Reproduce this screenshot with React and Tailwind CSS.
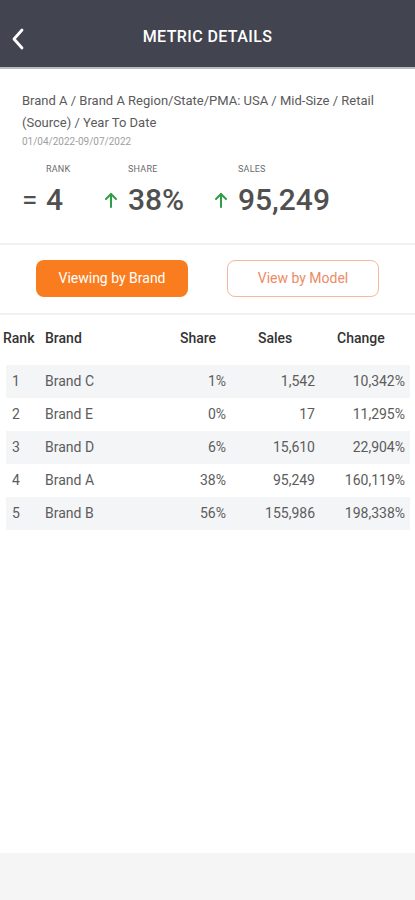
import React from "react";

const rows = [
  { rank: 1, brand: "Brand C", share: "1%", sales: "1,542", change: "10,342%" },
  { rank: 2, brand: "Brand E", share: "0%", sales: "17", change: "11,295%" },
  { rank: 3, brand: "Brand D", share: "6%", sales: "15,610", change: "22,904%" },
  { rank: 4, brand: "Brand A", share: "38%", sales: "95,249", change: "160,119%" },
  { rank: 5, brand: "Brand B", share: "56%", sales: "155,986", change: "198,338%" },
];

const UpArrow = () => (
  <svg width="14" height="16" viewBox="0 0 14 16" fill="none" stroke="#2f9e48" strokeWidth="2" strokeLinecap="round" strokeLinejoin="round">
    <path d="M7 15V2" />
    <path d="M2 7l5-5 5 5" />
  </svg>
);

const Stat = ({ label, value, symbol, width }) => (
  <div className={`flex items-end ${width}`}>
    <div className="w-[24px] h-[30px] flex items-center">{symbol}</div>
    <div className="flex flex-col">
      <span className="text-[9px] leading-[12px] tracking-wide text-[#6b6b6b] uppercase mb-[10px]">{label}</span>
      <span className="text-[30px] leading-[30px] font-medium text-[#505050]">{value}</span>
    </div>
  </div>
);

export default function App() {
  return (
    <div className="min-h-[900px] flex flex-col bg-white" style={{ fontFamily: "Roboto, 'Liberation Sans', sans-serif" }}>
      {/* Header */}
      <div className="h-[69px] pt-[7px] bg-[#42444f] border-b-2 border-[#b9bbc1] flex items-center relative">
        <button className="absolute left-[8px] top-[25px] p-[2px]" aria-label="Back">
          <svg width="16" height="24" viewBox="0 0 16 24" fill="none" stroke="white" strokeWidth="2.8" strokeLinecap="round" strokeLinejoin="round">
            <path d="M12 3L4 12l8 9" />
          </svg>
        </button>
        <h1 className="flex-1 text-center text-white text-[16px] font-medium tracking-wide">METRIC DETAILS</h1>
      </div>

      {/* Summary */}
      <div className="px-[22px] pt-[21px] pb-[28px] border-b-2 border-[#f1f1f1]">
        <p className="text-[13px] leading-[22px] text-[#5a5a5a]">
          Brand A / Brand A Region/State/PMA: USA / Mid-Size / Retail (Source) / Year To Date
        </p>
        <p className="text-[10px] leading-[14px] text-[#a0a0a0] mt-[1px]">01/04/2022-09/07/2022</p>
        <div className="flex mt-[14px]">
          <Stat width="w-[82px]" label="Rank" value="4" symbol={<span className="text-[28px] leading-[30px] text-[#505050]">=</span>} />
          <Stat width="w-[110px]" label="Share" value="38%" symbol={<UpArrow />} />
          <Stat width="" label="Sales" value="95,249" symbol={<UpArrow />} />
        </div>
      </div>

      {/* Toggle */}
      <div className="flex justify-center gap-[39px] pt-[15px] pb-[16px] border-b-2 border-[#f1f1f1]">
        <button className="w-[152px] h-[37px] rounded-[8px] bg-[#f97d1f] text-white text-[14px]">Viewing by Brand</button>
        <button className="w-[152px] h-[37px] rounded-[8px] border border-[#f5b89c] text-[#ec8a66] text-[14px]">View by Model</button>
      </div>

      {/* Table */}
      <div className="pt-[13px]">
        <div className="flex px-[3px] h-[20px] items-center text-[14px] font-medium text-[#333]">
          <span className="w-[42px]">Rank</span>
          <span className="w-[135px]">Brand</span>
          <span className="w-[78px]">Share</span>
          <span className="w-[79px]">Sales</span>
          <span>Change</span>
        </div>
        <div className="mt-[17px] mx-[6px] mr-[5px]">
          {rows.map((r, i) => (
            <div key={r.rank} className={`flex items-center h-[33px] text-[14px] text-[#5c5c5c] ${i % 2 === 0 ? "bg-[#f4f5f7]" : "bg-white"}`}>
              <span className="w-[39px] pl-[6px]">{r.rank}</span>
              <span className="w-[130px]">{r.brand}</span>
              <span className="w-[51px] text-right">{r.share}</span>
              <span className="w-[89px] text-right">{r.sales}</span>
              <span className="flex-1 text-right pr-[5px]">{r.change}</span>
            </div>
          ))}
        </div>
      </div>

      <div className="mt-auto h-[47px] bg-[#f5f5f5]" />
    </div>
  );
}
